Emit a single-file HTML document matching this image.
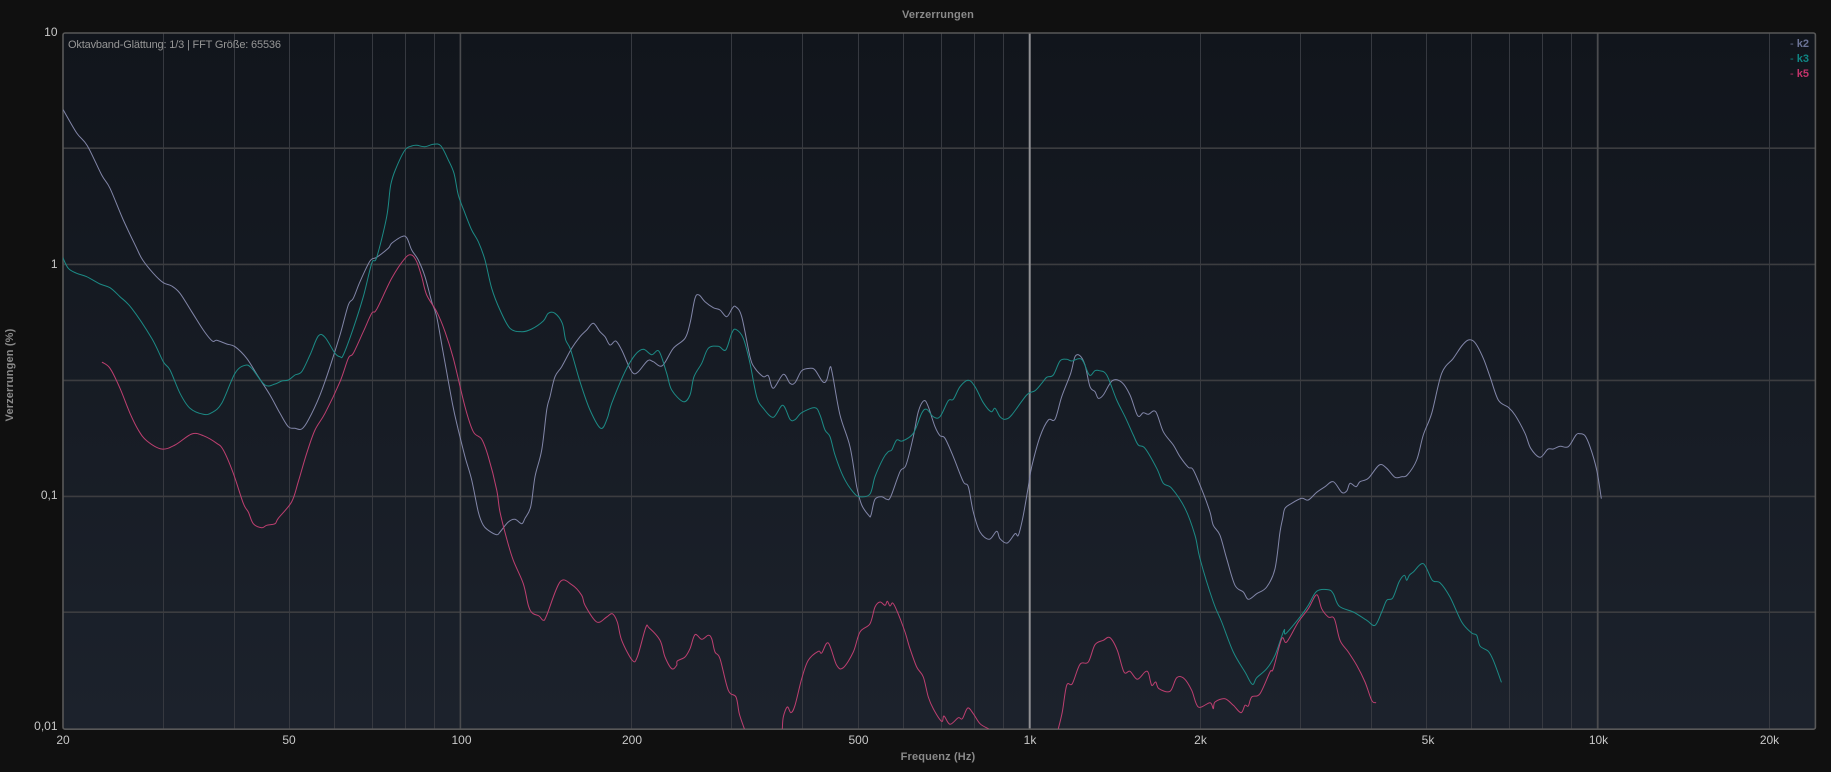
<!DOCTYPE html>
<html lang="de"><head><meta charset="utf-8"><title>Verzerrungen</title>
<style>
html,body{margin:0;padding:0;background:#101010;width:1831px;height:772px;overflow:hidden}
svg{display:block;font-family:"Liberation Sans",Arial,sans-serif}
.t{font-size:12px;fill:#c8c8c8}
.b{font-size:11px;font-weight:700;fill:#8a8a8a;letter-spacing:.15px}
.g{stroke:#363940;stroke-width:1;fill:none}
.h{stroke:#3c3d40;stroke-width:1.6;fill:none}
.c{fill:none;stroke-width:1;stroke-linejoin:round;stroke-linecap:round}
</style></head><body>
<svg width="1831" height="772" viewBox="0 0 1831 772" xmlns="http://www.w3.org/2000/svg">
<defs>
<linearGradient id="bg" x1="0" y1="0" x2="0" y2="1"><stop offset="0" stop-color="#11151c"/><stop offset="1" stop-color="#1c222c"/></linearGradient>
<clipPath id="cp"><rect x="63" y="33" width="1752" height="696"/></clipPath>
</defs>
<rect width="1831" height="772" fill="#101010"/>
<rect x="63" y="33" width="1752" height="696" fill="url(#bg)"/>
<path class="g" d="M163.5 33V729M234.5 33V729M289.5 33V729M334.5 33V729M372.5 33V729M405.5 33V729M434.5 33V729M631.5 33V729M731.5 33V729M802.5 33V729M858.5 33V729M903.5 33V729M941.5 33V729M974.5 33V729M1003.5 33V729M1200.5 33V729M1300.5 33V729M1371.5 33V729M1426.5 33V729M1471.5 33V729M1509.5 33V729M1542.5 33V729M1571.5 33V729M1769.5 33V729"/>
<path class="h" d="M63 148.2H1815M63 264.4H1815M63 380.4H1815M63 496.4H1815M63 612.2H1815"/>
<path d="M460.4 33V729" stroke="#4a4b4e" stroke-width="1.6" fill="none"/>
<path d="M1597.7 33V729" stroke="#4a4b4e" stroke-width="1.8" fill="none"/>
<path d="M1029.7 33V729" stroke="#909093" stroke-width="2" fill="none"/>
<rect x="63" y="33" width="1752.4" height="696.2" rx="2" fill="none" stroke="#585858" stroke-width="1.6"/>

<g clip-path="url(#cp)" id="curves">
<polyline class="c" stroke="#8286a8" points="63.3,110 76.7,133 87.3,145.7 101.7,175 110,188.3 123.3,220 136.7,248.3 142.7,260 153.3,273.3 163.3,282.7 171.7,286 180,293.3 191.7,311.7 203.3,330 212.3,341 216.7,340.3 226.7,344 235,346.7 246.7,358.3 258.3,376.7 270,395 280,413.3 288.3,426.7 295,428.3 301.7,429 308.3,420 320,395 330,366.7 340,335 348.3,305 353.3,298.3 360,281.7 370,261 376.7,257.3 388.3,248.3 391.7,243.3 401.7,236.7 406.7,237.7 411.7,250 418.3,260 425,276.7 431.7,301.7 436.7,316.7 443.3,353.3 452.7,405 458.3,430 465,456.7 471.7,480 478.3,512 483.3,525.3 488.3,530.3 496.7,534.7 500,532 508.3,522 515,519.3 521.7,523.7 525,518.3 530.7,506.7 535,476.7 541.7,450 546.7,410 550,396.7 555,376.7 561.7,366.7 571.7,348.3 580,336.7 586.7,330 593.3,323.3 600,331.7 605,336.7 610,345 615.7,341 621.7,350 628.3,365 633.3,373.3 638.3,371.7 647.7,360.7 653.3,361.7 662.3,365.7 673.3,348.3 685,338.3 690,323.3 695,298.3 699,295 705,301.7 713.3,307.7 720,310 726.7,316.7 732.3,308.3 735.7,306.7 741.7,316.7 750,356.7 755,368.3 763.3,376.7 768.3,375.7 773.3,388.3 783.3,374.3 790,383.3 795,382.7 801.7,370.7 810,368.3 815,370 822.7,381.7 826.7,380 830,367.3 832.3,373.3 840,415 850,446.7 856.7,486.7 861.7,505 869,515.7 871,515 875,499.3 881.7,496.7 886.7,499.3 890.7,496.7 900,471.7 906,465 913.3,436.7 918.3,411.7 924,400.7 928.3,406.7 935,426.7 940,435.7 945,438.3 953.3,456.7 963.3,481.7 968.3,486.7 973.3,512 980,532 989.3,539.3 996.7,531.3 1000,538.7 1007.3,543 1015,533.7 1018.3,535.3 1022.7,518.3 1028.3,486.7 1031.7,466.7 1040,436.7 1048.3,420 1055,419.3 1061.7,396.7 1070.7,373.3 1075,356.7 1080,355.7 1085,365 1090,386.7 1095,391.7 1098.3,398.3 1103.3,395 1112.3,380.7 1121.7,382.3 1130,395 1137.7,415.7 1143.3,412.7 1148.3,414.3 1155.7,411.7 1163.3,431.7 1173.3,445 1180,456.7 1188.3,467.3 1193.3,470 1203.3,493.3 1210,512 1213.3,525.3 1220,535.3 1226.7,558.7 1235,585.3 1243.3,592 1248.3,599.3 1256.7,593.7 1266.7,587 1275,568.7 1280,532 1282.7,518.3 1285,508.3 1291.7,503.3 1301.7,498.3 1308.3,500 1316.7,492.3 1325,486.7 1333.3,481.7 1341.7,492.3 1346.7,491 1350,483.3 1356,486.7 1360,481.7 1368.3,478.3 1379.3,465 1386.7,468.3 1395,477.3 1401.7,476.7 1407.3,475 1416.7,460 1423.3,435 1431.7,413.3 1441.7,373.3 1453.3,358.3 1461.7,346 1468.3,340 1475,342.7 1483.3,358.3 1490,376.7 1498.3,400 1508.3,407.3 1515,415 1525,433.3 1530.7,448.3 1540,457.3 1547.7,449.3 1553.3,449 1560,446.3 1568.3,446.7 1576,435 1580,433.7 1585,435.7 1590,446.7 1596.7,470 1601.3,498.3"/>
<polyline class="c" stroke="#1c8a85" points="62.5,257 68.3,268.3 76.7,273.3 86.7,276.7 100,284 110,287.7 120,296.7 131.7,308.3 151.7,338.3 163.3,361.7 170,370 180,393.3 190,408.3 203.3,414.3 211.7,412.7 221.7,403.3 235,373.3 245,365.3 251.7,368.3 265,385 275,384 281.7,381 288.3,380 295,375 301.7,371.7 310,355 318.3,336 325,337.3 335,353.3 340,356.7 343.3,355 353.3,328.3 363.3,296.7 371.7,263.3 376.7,257.3 386.7,216.7 390.7,185 396,168.3 405,150 411.7,146 416.7,145.3 425,146.7 433.3,144.3 440.7,145.7 448.3,160 454,173.3 458.3,195 465,213.3 471.7,230 478.3,241.7 485,260 491.7,288.3 500,310 510,328.3 521.7,331.7 531.7,329 543.3,321 548.3,313.3 555,313.3 562.3,323.3 565.7,340 570.7,350 580,381.7 590,410 600.7,428.3 607.3,418.3 611.7,403.3 625,371.7 635,355 643.3,349.3 651.7,354.7 659,351.3 666.7,373.3 671.7,390 683.3,401.7 690,395 694,376.7 701.7,363.3 708.3,348.3 718.3,346.3 725.7,350 731.7,333.3 735.7,329.3 743.3,338.3 750,363.3 756.7,396.7 763.3,408.3 773.3,417.3 782.7,405.3 790,419.3 795,419.7 801.7,412.7 815,407.7 820,415 825,430 830,436.7 835,455 843.3,476.7 853.3,492.3 860,496.7 870,494 875,476.7 883.3,458.3 888.3,451.7 891.7,450 896.7,440 902.3,441 913.3,433.3 921.7,413.3 926.7,409.3 933.3,416.7 940,416.7 948.3,400.7 953.3,399.3 960,386.7 968.3,380.3 975,386.7 983.3,402.7 991,411.7 995,408.3 1000,416.7 1005,419.3 1011.7,415 1026.7,395 1035,390.7 1041.7,383.3 1046.7,377.3 1053.3,375 1060,361 1066.7,359.3 1071.7,361 1081.7,359.3 1089.3,375 1095,370.7 1099.3,370.7 1106.7,375 1116.7,400 1125,416.7 1133.3,435 1138.3,445 1145,448.3 1156.7,468.3 1163.3,483.3 1171.7,488.3 1185,508.3 1195,535.3 1200,558.7 1213.3,602 1221.7,622 1233.3,652 1245,672 1252.3,684.3 1256.7,677.7 1266.7,668.7 1275,655.3 1284,630.3 1285.7,633.7 1300,617 1308.3,605.3 1316.7,591.3 1328.3,589.7 1333.3,593.7 1339.3,606.3 1353.3,612 1366.7,620.3 1375,625.3 1381.7,612 1386.7,600.3 1392.7,598 1399,582 1404.3,575.3 1406.7,580.3 1409.3,575.3 1413.3,572 1423.3,563.7 1432.3,580.3 1440,582.7 1450,597 1461.7,622 1471.7,633 1476.7,635.3 1480,646 1488.3,651.3 1493.3,660.3 1501.3,682"/>
<polyline class="c" stroke="#bd3f70" points="102.3,362.3 110,368.3 120,388.3 130,413.3 138.3,430 146.7,440.7 161.7,449 175,445 191.7,434 203.3,435.7 216.7,443.3 223.3,450 233.3,473.3 243.3,503.3 248.3,512 253.3,523.7 261.7,527.7 266.7,525.3 275,523.7 278.3,518.3 291.7,501.7 298.3,481.7 306.7,453.3 315,430 325,413.3 340,381.7 348.3,358.3 353.3,353.3 363.3,331.7 371.7,313.3 376.7,309.3 391.7,278.3 405,258.3 411.7,255 416.7,261.7 421.7,276.7 426.7,295 436.7,311.7 445,331.7 453.3,358.3 465,406.7 473.3,431.7 481.7,439.3 488.3,456.7 496.7,490 500,512 506.7,538.7 513.3,560.3 523.3,583.7 528.3,605.3 532.3,613 539,616 543.3,620.3 546.7,615.3 560,582 571.7,584.7 581.7,595.3 585,605.3 596.7,622 606.7,617 612.3,613.7 617.3,622 621.7,640.3 632.3,660.3 637.3,657 645.7,627.7 649,627.7 660,640.3 665,657 671.7,668.7 676.7,665.3 677.3,661 685,657 690,648.7 695,634.7 701.7,639.3 708.3,635.3 711.7,638.7 715,652 720,658.7 728.3,690.3 736,697 739.3,713.7 744.3,728.7"/>
<polyline class="c" stroke="#bd3f70" points="782.3,728.7 783.3,717 787.3,707 791,712.7 795,705.3 801.7,678.7 808.3,660.3 818.3,651.3 821.7,653 828.3,643 836.7,665.3 843.3,667.7 853.3,652 860,632 870,623.7 875,607 880,602 885,605.3 887.3,601.3 890,606 892.7,603 896.7,610.3 905,632 910,648.7 916.7,667 923.3,677 928.3,697 933.3,708.7 941.7,721.3 944,716 950,724.3 958.3,717.7 962.3,718.7 967.7,708 973.3,713.7 980,723.7 988.3,728.7"/>
<polyline class="c" stroke="#bd3f70" points="1058.3,728.7 1062.3,712 1066.7,685.3 1072.3,683.7 1080,664.3 1088.3,662 1095,644.7 1103.3,640.3 1110,637.7 1117.3,650.3 1124,672 1130,671.3 1137.3,679.3 1145,672 1148.3,672.7 1151.7,685.3 1155.7,682 1159,688.7 1170,691.3 1176.7,677.7 1184.3,678.7 1191.7,690.3 1198.3,707 1210,702.7 1213.3,708.7 1215,702 1225,698.7 1233.3,705.3 1241,712.7 1245,705.3 1248.3,706 1251.7,697 1260,693.7 1270,672 1273.3,668.7 1281.7,638.7 1286.7,642 1298.3,622 1308.3,608.7 1316.7,594.7 1321.7,608.7 1328.3,617 1334.3,618.7 1340,640.3 1348.3,652 1356.7,665.3 1365,682 1371.7,700.3 1375.7,702.7"/>
</g>

<text x="938" y="18" text-anchor="middle" class="b">Verzerrungen</text>
<text x="68" y="48" font-size="11" fill="#969696" textLength="213" lengthAdjust="spacing">Oktavband-Glättung: 1/3 | FFT Größe: 65536</text>
<g font-size="11" font-weight="700" text-anchor="end">
<text x="1809" y="47" fill="#6b7396"><tspan fill="#6b7396" font-weight="400">- </tspan>k2</text>
<text x="1809" y="62" fill="#0f8583"><tspan fill="#0f8583" font-weight="400">- </tspan>k3</text>
<text x="1809" y="77" fill="#c2336a"><tspan fill="#c2336a" font-weight="400">- </tspan>k5</text>
</g>
<g class="t" text-anchor="end">
<text x="57.5" y="36">10</text>
<text x="57.5" y="268">1</text>
<text x="57.5" y="499">0,1</text>
<text x="57.5" y="730">0,01</text>
</g>
<g class="t" text-anchor="middle">
<text x="63" y="744">20</text>
<text x="289" y="744">50</text>
<text x="461.5" y="744">100</text>
<text x="632" y="744">200</text>
<text x="858.5" y="744">500</text>
<text x="1030" y="744">1k</text>
<text x="1200.5" y="744">2k</text>
<text x="1428" y="744">5k</text>
<text x="1598.5" y="744">10k</text>
<text x="1769.5" y="744">20k</text>
</g>
<text x="938" y="760" text-anchor="middle" class="b">Frequenz (Hz)</text>
<text transform="translate(13,375) rotate(-90)" text-anchor="middle" class="b">Verzerrungen (%)</text>
</svg>
<script>
(function(){
var NS="http://www.w3.org/2000/svg";
var ls=document.querySelectorAll("#curves polyline");
for(var n=0;n<ls.length;n++){
  var l=ls[n],a=l.getAttribute("points").trim().split(/\s+/).map(function(s){return s.split(",").map(Number)});
  var d="M"+a[0][0]+" "+a[0][1];
  for(var i=0;i<a.length-1;i++){
    var p0=a[Math.max(i-1,0)],p1=a[i],p2=a[i+1],p3=a[Math.min(i+2,a.length-1)];
    var c1=[p1[0]+(p2[0]-p0[0])/6,p1[1]+(p2[1]-p0[1])/6],c2=[p2[0]-(p3[0]-p1[0])/6,p2[1]-(p3[1]-p1[1])/6];
    d+="C"+c1[0].toFixed(1)+" "+c1[1].toFixed(1)+" "+c2[0].toFixed(1)+" "+c2[1].toFixed(1)+" "+p2[0]+" "+p2[1];
  }
  var p=document.createElementNS(NS,"path");
  p.setAttribute("class","c");p.setAttribute("stroke",l.getAttribute("stroke"));p.setAttribute("d",d);
  l.parentNode.replaceChild(p,l);
}
})();
</script>
</body></html>
